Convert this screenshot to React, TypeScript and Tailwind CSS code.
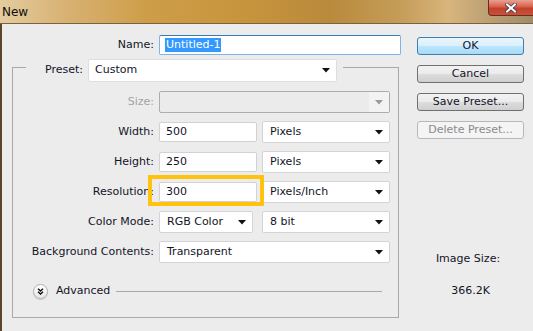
import React from "react";

const font = "font-['DejaVu_Sans','Liberation_Sans',sans-serif]";

function Arrow({ color = "#111" }: { color?: string }) {
  return (
    <svg width="8" height="5" viewBox="0 0 8 5" className="shrink-0">
      <path d="M0 0h8L4 4.5z" fill={color} />
    </svg>
  );
}

function Select({ value, className = "" }: { value: string; className?: string }) {
  return (
    <div
      className={`flex h-[22px] items-center justify-between rounded-[2px] border border-[#d4d4d4] bg-white pl-[7px] pr-[6px] text-[11px] text-[#141428] ${className}`}
    >
      <span>{value}</span>
      <Arrow />
    </div>
  );
}

function Field({ value, className = "" }: { value: string; className?: string }) {
  return (
    <div
      className={`flex h-[20px] items-center rounded-[2px] border border-[#d2d2d2] bg-white pl-[6px] text-[11px] text-[#141428] ${className}`}
    >
      {value}
    </div>
  );
}

function Row({ label, children, dim = false }: { label: string; children: React.ReactNode; dim?: boolean }) {
  return (
    <div className="flex h-[22px] items-center">
      <div className={`w-[142px] pr-[1px] text-right text-[11px] ${dim ? "text-[#a3a3a3]" : "text-[#141428]"}`}>
        {label}
      </div>
      <div className="ml-[4px] flex items-center">{children}</div>
    </div>
  );
}

function Button({ label, primary = false, disabled = false }: { label: string; primary?: boolean; disabled?: boolean }) {
  const tone = disabled
    ? "border-[#b5b9bc] bg-[#f4f4f4] text-[#8a8a8a]"
    : primary
      ? "border-[#3c7fb1] bg-[linear-gradient(180deg,#eaf6fd_0%,#d9f0fc_50%,#bee6fd_51%,#a7d9f5_100%)] text-[#141428]"
      : "border-[#707070] bg-[linear-gradient(180deg,#f2f2f2_0%,#ebebeb_50%,#dddddd_51%,#cfcfcf_100%)] text-[#141428]";
  return (
    <div className={`flex h-[18px] w-[107px] items-center justify-center rounded-[3px] border text-[11px] ${tone}`}>
      {label}
    </div>
  );
}

export default function App() {
  return (
    <div className={`flex h-[331px] w-[533px] flex-col overflow-hidden bg-[#ececec] ${font}`}>
      {/* title bar */}
      <div className="flex h-[24px] shrink-0 items-start justify-between border-b border-[#7a6240] bg-[linear-gradient(90deg,#e4cc9f_0%,#d8b274_12%,#cd9d48_28%,#c8953d_45%,#b98a3c_62%,#c59c58_75%,#d8b57c_84%,#b69d74_93%,#9f8b68_100%)]">
        <span className="pl-[2px] pt-[3px] text-[12px] text-[#101010]">New</span>
        <div className="flex h-[16px] w-[45px] items-center justify-center rounded-bl-[4px] border-b border-l border-[#6e2a1e] bg-[linear-gradient(180deg,#e9a190_0%,#d6604a_45%,#c2402b_55%,#c9523a_100%)]">
          <svg width="12" height="10" viewBox="0 0 12 10">
            <path d="M2 1.5l8 7M10 1.5l-8 7" stroke="#3a3a4a" strokeWidth="3.6" strokeLinecap="square" />
            <path d="M2 1.5l8 7M10 1.5l-8 7" stroke="#ffffff" strokeWidth="2" strokeLinecap="square" />
          </svg>
        </div>
      </div>

      {/* body */}
      <div className="flex flex-1 border-l-2 border-[#5c4526]">
        <div className="w-[403px]">
          {/* name */}
          <div className="mt-[11px] flex h-[20px] items-center">
            <div className="w-[153px] pr-[1px] text-right text-[11px] text-[#141428]">Name:</div>
            <div className="ml-[4px] flex h-[20px] w-[242px] items-center rounded-[2px] border border-[#7eb4ea] border-t-[#3d7bad] bg-white pl-[5px]">
              <span className="bg-[#3399ff] px-[1px] text-[11px] leading-[14px] text-white">Untitled-1</span>
            </div>
          </div>

          {/* group */}
          <div className="ml-[10px] mt-[4px] w-[387px]">
            <div className="flex h-[23px]">
              <div className="mt-[8px] w-[14px] border-l border-t border-[#a9a9a9]" />
              <div className="flex w-[58px] items-center justify-end pr-[1px] text-[11px] text-[#141428]">Preset:</div>
              <div className="ml-[4px] flex w-[249px] items-center justify-between rounded-[2px] border border-[#dedede] bg-white pl-[6px] pr-[6px] text-[11px] text-[#141428]">
                <span>Custom</span>
                <Arrow />
              </div>
              <div className="ml-[6px] mt-[8px] flex-1 border-r border-t border-[#a9a9a9]" />
            </div>

            <div className="flex h-[236px] flex-col gap-[8px] border-b border-l border-r border-[#a9a9a9] pt-[9px]">
              <Row label="Size:" dim>
                <div className="flex h-[22px] w-[231px] items-center justify-end rounded-[2px] border border-[#adadad] bg-[#ebebeb]">
                  <div className="flex h-full w-[20px] items-center justify-center bg-[#f3f3f3]">
                    <Arrow color="#9a9a9a" />
                  </div>
                </div>
              </Row>
              <Row label="Width:">
                <Field value="500" className="w-[98px]" />
                <Select value="Pixels" className="ml-[5px] w-[128px]" />
              </Row>
              <Row label="Height:">
                <Field value="250" className="w-[98px]" />
                <Select value="Pixels" className="ml-[5px] w-[128px]" />
              </Row>
              <Row label="Resolution:">
                <div className="relative">
                  <Field value="300" className="w-[98px]" />
                  <div className="absolute -left-[11px] -right-[7px] -top-[7px] -bottom-[4px] border-[4px] border-[#ffc20e]" />
                </div>
                <Select value="Pixels/Inch" className="ml-[5px] w-[128px]" />
              </Row>
              <Row label="Color Mode:">
                <Select value="RGB Color" className="w-[94px]" />
                <Select value="8 bit" className="ml-[9px] w-[128px]" />
              </Row>
              <Row label="Background Contents:">
                <Select value="Transparent" className="w-[231px]" />
              </Row>

              <div className="mt-[13px] flex h-[15px] items-center pl-[20px] pr-[16px]">
                <div className="flex h-[15px] w-[15px] items-center justify-center rounded-full border border-[#b0b0b0] bg-[linear-gradient(180deg,#ffffff_0%,#e8e8e8_100%)] shadow-[0_1px_1px_rgba(0,0,0,0.15)]">
                  <svg width="7" height="7" viewBox="0 0 7 7">
                    <path d="M1 0.8l2.5 2.2 2.5-2.2M1 3.8l2.5 2.2 2.5-2.2" stroke="#111" strokeWidth="1.4" fill="none" />
                  </svg>
                </div>
                <span className="ml-[8px] text-[11px] text-[#141428]">Advanced</span>
                <div className="ml-[6px] h-px flex-1 bg-[#a9a9a9]" />
              </div>
            </div>
          </div>
        </div>

        {/* right column */}
        <div className="flex flex-1 flex-col pl-[12px]">
          <div className="mt-[13px] flex flex-col gap-[10px]">
            <Button label="OK" primary />
            <Button label="Cancel" />
            <Button label="Save Preset..." />
            <Button label="Delete Preset..." disabled />
          </div>
          <div className="mt-[112px] w-[107px] pr-[5px] text-center text-[11px] text-[#141428]">Image Size:</div>
          <div className="mt-[15px] w-[107px] text-center text-[11px] text-[#141428]">366.2K</div>
        </div>
      </div>
    </div>
  );
}
